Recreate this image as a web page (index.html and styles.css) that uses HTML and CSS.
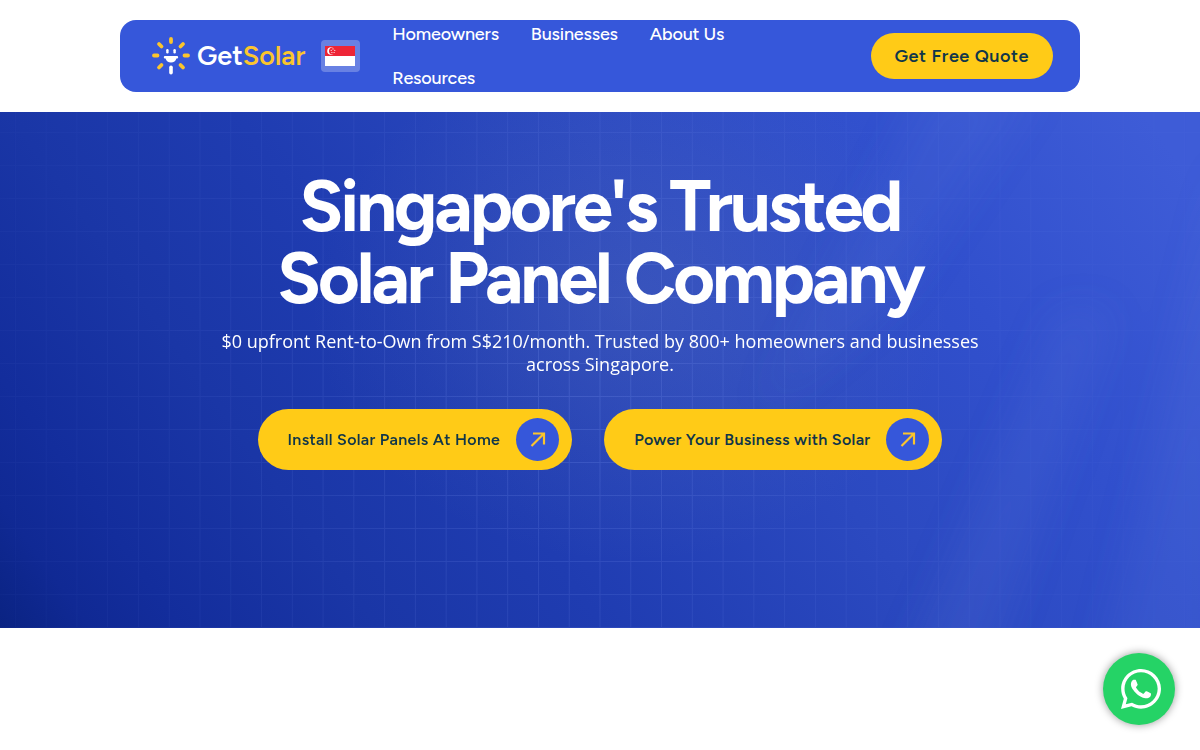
FILE: index.html
```
<!DOCTYPE html>
<html lang="en">
<head>
    <meta charset="UTF-8">
    <meta name="viewport" content="width=device-width, initial-scale=1.0">
    <title>GetSolar</title>
    <link rel="stylesheet" href="styles.css">
</head>
<body>
    <header class="site-header">
        <a class="logo" href="#">
            <svg class="logo-mark" viewBox="0 0 38 38" aria-hidden="true">
                <g stroke="#fbc52d" stroke-width="3.800" stroke-linecap="round">
                    <path d="M19 2v3M2 18.500h3.500M32.500 18.500H36M7 7l2.500 2.500M31 7l-2.500 2.500M7 30.500l2.500-2.500M31 30.500l-2.500-2.500"/>
                </g>
                <g fill="#fff">
                    <rect x="14.200" y="12" width="2.400" height="4.500" rx="1.200"/>
                    <rect x="21.400" y="12" width="2.400" height="4.500" rx="1.200"/>
                    <path d="M13 19h12a1.200 1.200 0 0 1 0 2.400h-.6a5.600 5.600 0 0 1-10.800 0H13a1.200 1.200 0 0 1 0-2.400z"/>
                    <rect x="17.200" y="28.500" width="3.600" height="9" rx="1.800"/>
                </g>
            </svg>
            <span class="logo-text">Get<span class="logo-accent">Solar</span></span>
        </a>
        <button class="country-btn" type="button" aria-label="Singapore">
            <svg class="flag" viewBox="0 0 30 20" aria-hidden="true">
                <path fill="#fff" d="M0 0h30v20H0z"/>
                <path fill="#ee2536" d="M0 0h30v10H0z"/>
                <circle cx="6" cy="5" r="3.800" fill="#fff"/>
                <circle cx="7.500" cy="5" r="3.500" fill="#ee2536"/>
                <g fill="#fff">
                    <circle cx="8" cy="2.900" r=".6"/>
                    <circle cx="6.200" cy="4.300" r=".6"/>
                    <circle cx="9.800" cy="4.300" r=".6"/>
                    <circle cx="6.900" cy="6.500" r=".6"/>
                    <circle cx="9.100" cy="6.500" r=".6"/>
                </g>
            </svg>
        </button>
        <nav class="main-nav">
            <a href="#">Homeowners</a>
            <a href="#">Businesses</a>
            <a href="#">About Us</a>
            <a href="#">Resources</a>
        </nav>
        <a class="quote-btn" href="#">Get Free Quote</a>
    </header>

    <main class="hero">
        <svg class="hero-bg" viewBox="0 0 1200 516" preserveAspectRatio="xMidYMid slice" aria-hidden="true">
            <defs>
                <linearGradient id="base" gradientUnits="userSpaceOnUse" x1="0" y1="516" x2="1000" y2="-200">
                    <stop offset="0" stop-color="#0a2382"/>
                    <stop offset=".06" stop-color="#102994"/>
                    <stop offset=".12" stop-color="#132d9c"/>
                    <stop offset=".25" stop-color="#1a36a6"/>
                    <stop offset=".4" stop-color="#1f3cb1"/>
                    <stop offset=".62" stop-color="#2b49c0"/>
                    <stop offset=".8" stop-color="#3150cd"/>
                    <stop offset="1" stop-color="#3e5cd7"/>
                </linearGradient>
                <radialGradient id="glow">
                    <stop offset="0" stop-color="#8090b8" stop-opacity=".18"/>
                    <stop offset="1" stop-color="#8090b8" stop-opacity="0"/>
                </radialGradient>
                <radialGradient id="fade" gradientUnits="userSpaceOnUse" cx="560" cy="290" r="600">
                    <stop offset="0" stop-color="#fff" stop-opacity=".9"/>
                    <stop offset=".6" stop-color="#fff" stop-opacity=".35"/>
                    <stop offset="1" stop-color="#fff" stop-opacity=".15"/>
                </radialGradient>
                <pattern id="grid" patternUnits="userSpaceOnUse" x="599.500" y="20" width="30.770" height="33">
                    <path fill="#8ea6ff" d="M0 0h1v33H0zM1 0h30v1H1z"/>
                </pattern>
                <mask id="grid-mask">
                    <rect width="1200" height="516" fill="url(#fade)"/>
                </mask>
                <filter id="soft" x="-50%" y="-20%" width="200%" height="140%">
                    <feGaussianBlur stdDeviation="20"/>
                </filter>
            </defs>
            <rect width="1200" height="516" fill="url(#base)"/>
            <ellipse cx="630" cy="190" rx="320" ry="260" fill="url(#glow)"/>
            <g fill="#7088e0" filter="url(#soft)">
                <path opacity=".1" d="M930-30h110L900 180 760 300z"/>
                <path opacity=".12" d="M1060 200h50L985 560h-80z"/>
                <path opacity=".12" d="M1230 40v520h-130z"/>
            </g>
            <rect width="1200" height="516" fill="url(#grid)" mask="url(#grid-mask)" opacity=".22"/>
        </svg>
        <div class="hero-content">
            <h1>Singapore's Trusted<br>Solar Panel Company</h1>
            <p>$0 upfront Rent-to-Own from S$210/month. Trusted by 800+ homeowners and businesses across Singapore.</p>
            <div class="hero-actions">
                <a class="cta" href="#">
                    Install Solar Panels At Home
                    <span class="cta-icon">
                        <svg viewBox="0 0 16 16" aria-hidden="true"><path d="M1.500 14L13.500 2M3 1.500h11v11"/></svg>
                    </span>
                </a>
                <a class="cta" href="#">
                    Power Your Business with Solar
                    <span class="cta-icon">
                        <svg viewBox="0 0 16 16" aria-hidden="true"><path d="M1.500 14L13.500 2M3 1.500h11v11"/></svg>
                    </span>
                </a>
            </div>
        </div>
    </main>

    <a class="whatsapp" href="#" aria-label="WhatsApp">
        <svg viewBox="0 32 448 448" aria-hidden="true">
            <path d="M380.9 97.1C339 55.1 283.2 32 223.9 32c-122.4 0-222 99.6-222 222 0 39.1 10.2 77.3 29.6 111L0 480l117.7-30.9c32.4 17.7 68.9 27 106.1 27h.1c122.3 0 224.1-99.6 224.1-222 0-59.3-25.2-115-67.1-157zm-157 341.6c-33.2 0-65.7-8.9-94-25.7l-6.7-4-69.8 18.3L72 359.2l-4.4-7c-18.5-29.4-28.2-63.3-28.2-98.2 0-101.7 82.8-184.5 184.6-184.5 49.3 0 95.6 19.2 130.4 54.1 34.8 34.9 56.2 81.2 56.1 130.5 0 101.8-84.9 184.6-186.6 184.6zm101.2-138.2c-5.5-2.8-32.8-16.2-37.9-18-5.1-1.9-8.8-2.8-12.5 2.8-3.7 5.6-14.3 18-17.6 21.8-3.2 3.7-6.5 4.2-12 1.4-32.6-16.3-54-29.1-75.5-66-5.7-9.8 5.7-9.1 16.3-30.3 1.8-3.7.9-6.9-.5-9.7-1.4-2.8-12.5-30.1-17.1-41.2-4.5-10.8-9.1-9.3-12.5-9.5-3.2-.2-6.9-.2-10.6-.2-3.7 0-9.7 1.4-14.8 6.9-5.1 5.6-19.4 19-19.4 46.3 0 27.3 19.9 53.7 22.6 57.4 2.8 3.7 39.1 59.7 94.8 83.8 35.2 15.2 49 16.5 66.6 13.9 10.7-1.6 32.8-13.4 37.4-26.4 4.6-13 4.6-24.1 3.2-26.4-1.3-2.5-5-3.9-10.5-6.6z"/>
        </svg>
    </a>
</body>
</html>
```

FILE: styles.css
```
* {
    box-sizing: border-box;
}

body {
    margin: 0;
    background: #fff;
    font-family: Figtree, Lato, sans-serif;
    color: #fff;
}

a {
    color: inherit;
    text-decoration: none;
}

/* Header */
.site-header {
    display: flex;
    align-items: center;
    width: 80%;
    height: 72px;
    margin: 20px auto;
    padding: 0 27px 0 32px;
    border-radius: 16px;
    background: #3657da;
}

.logo {
    display: flex;
    align-items: center;
    gap: 7px;
    margin-right: 16px;
}

.logo-mark {
    width: 38px;
    height: 38px;
}

.logo-text {
    font-size: 27px;
    font-weight: 600;
    line-height: 32px;
}

.logo-accent {
    color: #fbc52d;
}

.country-btn {
    display: flex;
    padding: 6px 5px 6px 4px;
    border: none;
    border-radius: 4px;
    background: rgba(255, 255, 255, 0.25);
    cursor: pointer;
}

.flag {
    width: 30px;
    height: 20px;
}

.main-nav {
    display: flex;
    flex: 1;
    flex-wrap: wrap;
    column-gap: 32px;
    margin: 0 64px 0 32px;
    font-size: 18px;
    font-weight: 500;
    letter-spacing: -0.01em;
    line-height: 44px;
}

.quote-btn {
    padding: 0 24px;
    border-radius: 23px;
    background: #ffcb17;
    color: #10364a;
    font-size: 18px;
    font-weight: 600;
    letter-spacing: 0.03em;
    line-height: 46px;
    white-space: nowrap;
}

/* Hero */
.hero {
    position: relative;
    padding: 58px 20px 158px;
    background: #213db4;
    text-align: center;
}

.hero-bg {
    position: absolute;
    inset: 0;
    width: 100%;
    height: 100%;
}

.hero-content {
    position: relative;
    max-width: 800px;
    margin: 0 auto;
}

h1 {
    margin: 0;
    font-size: 72px;
    font-weight: 700;
    letter-spacing: -3px;
    line-height: 72px;
}

.hero-content p {
    margin: 16px 0 33px;
    font-family: "Open Sans", sans-serif;
    font-size: 18px;
    line-height: 23px;
}

.hero-actions {
    display: flex;
    flex-wrap: wrap;
    justify-content: center;
    gap: 32px;
}

.cta {
    display: flex;
    align-items: center;
    gap: 16px;
    padding: 9px 13px 9px 30px;
    border-radius: 31px;
    background: #ffcb17;
    color: #10364a;
    font-size: 16px;
    font-weight: 600;
    letter-spacing: 0.02em;
}

.cta-icon {
    display: flex;
    align-items: center;
    justify-content: center;
    width: 43px;
    height: 43px;
    border-radius: 50%;
    background: #3657da;
}

.cta-icon svg {
    width: 16px;
    height: 16px;
    fill: none;
    stroke: #fbc52d;
    stroke-width: 2.2;
}

/* Floating chat button */
.whatsapp {
    position: fixed;
    right: 25px;
    bottom: 25px;
    display: flex;
    align-items: center;
    justify-content: center;
    width: 72px;
    height: 72px;
    padding-left: 4px;
    border-radius: 50%;
    background: #25d366;
    box-shadow: 0 0 8px rgba(0, 0, 0, 0.4);
}

.whatsapp svg {
    width: 40px;
    height: 40px;
    fill: #fff;
}
```
